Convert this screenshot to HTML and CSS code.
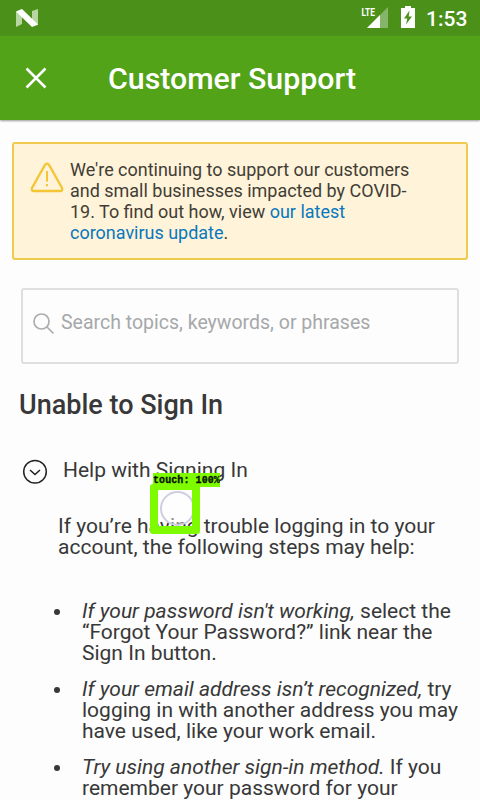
FILE: index.html
```html
<!DOCTYPE html>
<html lang="en">
<head>
<meta charset="utf-8">
<title>Customer Support</title>
<link rel="stylesheet" href="styles.css">
</head>
<body>
<div class="status">
  <svg class="n-logo" width="24" height="20" viewBox="0 0 24 20"><path d="M1 4l6-3v15l-6 3zM17 3l6-2v16l-6 1z" fill="#b8d6a2"/><path d="M1 3.500L7 1l16 15.500-6 2.500z" fill="#fff"/></svg>
  <svg class="signal" width="28" height="24" viewBox="0 0 28 24"><path d="M27 2v21H6z" fill="#85b568"/><path d="M19 10v13H6z" fill="#fff"/><text x="0.500" y="11" class="lte" textLength="13.500" lengthAdjust="spacingAndGlyphs">LTE</text></svg>
  <svg class="battery" width="14" height="22" viewBox="0 0 14 22"><path d="M0 2h4V0h6v2h4v20H0z" fill="#fff"/><path d="M8.500 4.500L3 12.500h3.300L5 18.500l6-8H7.700z" fill="#4b9119"/></svg>
  <span class="clock">1:53</span>
</div>
<header class="bar">
  <svg class="close" width="22" height="22" viewBox="0 0 22 22"><path d="M1.500 1.500l19 19M20.500 1.500l-19 19" stroke="#fff" stroke-width="2.500"/></svg>
  <h1>Customer Support</h1>
</header>
<main>
  <section class="notice">
    <svg class="warning" width="34" height="32" viewBox="0 0 34 32" fill="none" stroke="#f4c534"><path d="M14.800 3.200q2.200-3 4.400 0L32 26q1 3-2 3H4q-3 0-2-3z" stroke-width="2.300"/><path d="M17 9v10.500M17 22v2.300" stroke-width="2"/></svg>
    <p>We're continuing to support our customers<br>and small businesses impacted by COVID-<br>19. To find out how, view <a>our latest<br>coronavirus update</a>.</p>
  </section>
  <div class="search">
    <svg width="22" height="22" viewBox="0 0 22 22" fill="none" stroke="#adadad" stroke-width="1.700"><circle cx="8.500" cy="8.500" r="7.500"/><path d="M14 14l6.500 6.500"/></svg>
    <span>Search topics, keywords, or phrases</span>
  </div>
  <h2>Unable to Sign In</h2>
  <div class="topic">
    <svg width="26" height="26" viewBox="0 0 26 26" fill="none" stroke="#222" stroke-width="1.500"><circle cx="13" cy="12.700" r="11.300"/><path d="M8 11l5 4.500 5-4.500"/></svg>
    <span>Help with Signing In</span>
  </div>
  <p class="intro">If you’re having trouble logging in to your<br>account, the following steps may help:</p>
  <ul>
    <li><em>If your password isn't working,</em> select the<br>“Forgot Your Password?” link near the<br>Sign In button.</li>
    <li><em>If your email address isn’t recognized,</em> try<br>logging in with another address you may<br>have used, like your work email.</li>
    <li><em>Try using another sign-in method.</em> If you<br>remember your password for your</li>
  </ul>
</main>
<div class="touch"><div class="ring"></div></div>
<div class="touch-label">touch: 100%</div>
</body>
</html>
```
FILE: styles.css
```css
* { box-sizing: border-box; }
body {
  margin: 0;
  width: 480px;
  height: 800px;
  overflow: hidden;
  position: relative;
  background: #fdfdfd;
  color: #383838;
  font-family: Roboto, sans-serif;
}
h1, h2, p, ul { margin: 0; }
.status {
  height: 36px;
  background: #4b9119;
  display: flex;
  align-items: flex-start;
  padding: 6px 12px 0 15px;
}
.n-logo { margin-top: 2px; }
.signal { margin: -1px 0 0 auto; }
.lte { font: 700 11px Roboto, sans-serif; fill: #fff; }
.battery { margin: 0 11px 0 12px; }
.clock {
  width: 42px;
  font-size: 21px;
  font-weight: 500;
  line-height: 26px;
  color: #fff;
}
.bar {
  height: 84px;
  background: #53a318;
  display: flex;
  align-items: center;
  padding-left: 25px;
  box-shadow: 0 1px 2px #999;
}
.bar h1 {
  margin: 2px 0 0 61px;
  color: #fff;
  font-size: 30.3px;
  font-weight: 500;
  line-height: 36px;
  white-space: nowrap;
}
.notice {
  margin: 22px 12px 0;
  height: 118px;
  border: 2px solid #f0ca4c;
  border-radius: 3px;
  background: #fff3d9;
  display: flex;
  padding: 15px 0 0 16px;
}
.warning { margin-top: 3px; }
.notice p {
  margin-left: 6px;
  font-size: 17.98px;
  line-height: 21px;
  color: #413d35;
  white-space: nowrap;
}
.notice a { color: #0878bd; }
.search {
  margin: 28px 21px 0;
  height: 76px;
  border: 2px solid #dedfe0;
  border-radius: 3px;
  display: flex;
  align-items: flex-start;
  padding: 23px 0 0 10px;
  color: #a6a8aa;
}
.search span {
  margin: -2px 0 0 6px;
  font-size: 19.5px;
  line-height: 24px;
  white-space: nowrap;
}
h2 {
  margin: 24px 0 0 19px;
  font-size: 27px;
  font-weight: 500;
  line-height: 34px;
}
.topic {
  margin: 35px 0 0 22px;
  display: flex;
  align-items: flex-start;
  height: 30px;
}
.topic svg { margin-top: 2px; }
.topic span {
  margin-left: 15px;
  font-size: 21px;
  line-height: 26px;
}
.intro {
  margin: 29px 0 0 58px;
  font-size: 21px;
  line-height: 21px;
  white-space: nowrap;
}
ul {
  list-style: none;
  padding: 0;
  margin: 43px 0 0 54px;
  font-size: 21px;
  line-height: 21px;
  white-space: nowrap;
}
li {
  position: relative;
  padding-left: 28px;
  margin-bottom: 15px;
}
li::before {
  content: "";
  position: absolute;
  left: 0;
  top: 8px;
  width: 6px;
  height: 6px;
  border-radius: 50%;
  background: #383838;
}
.touch {
  position: absolute;
  left: 150px;
  top: 484px;
  width: 50px;
  height: 50px;
  border: 8px solid #7ffb00;
  border-top-width: 6px;
  border-radius: 3px;
  overflow: hidden;
}
.ring {
  width: 35px;
  height: 35px;
  margin: 1px 0 0 2px;
  border: 2px solid #cfcde0;
  border-radius: 50%;
  background: rgba(255, 255, 255, .4);
}
.touch-label {
  position: absolute;
  left: 153px;
  top: 473px;
  width: 67px;
  height: 14px;
  padding-top: 1px;
  background: #7ffb00;
  color: #071000;
  font: 700 10px/13px "Liberation Mono", monospace;
  letter-spacing: .08px;
  -webkit-text-stroke: .3px #071000;
  white-space: nowrap;
}
```
